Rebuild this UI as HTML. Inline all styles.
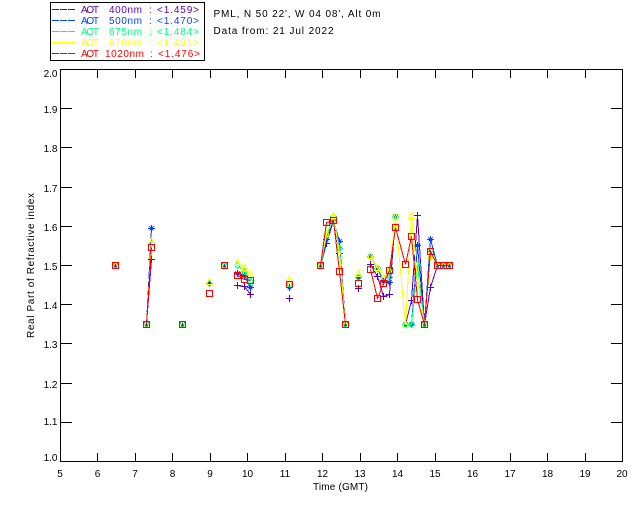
<!DOCTYPE html>
<html><head><meta charset="utf-8"><style>
html,body{margin:0;padding:0;background:#fff;width:640px;height:512px;overflow:hidden}
svg{display:block;position:absolute;left:0;top:0}
text{font-family:"Liberation Sans",sans-serif;font-size:10px;fill:#000}
.s{fill:none;stroke-width:1;shape-rendering:crispEdges}
.k{stroke:#000;fill:none;shape-rendering:crispEdges}
.p{stroke:#6000b0;marker-start:url(#mp);marker-mid:url(#mp);marker-end:url(#mp)}
.b{stroke:#0040ff;marker-start:url(#mb);marker-mid:url(#mb);marker-end:url(#mb)}
.g{stroke:#00ff80;marker-start:url(#mg);marker-mid:url(#mg);marker-end:url(#mg)}
.y{stroke:#ffff00;marker-start:url(#my);marker-mid:url(#my);marker-end:url(#my)}
.r{stroke:#ff0000;marker-start:url(#mr);marker-mid:url(#mr);marker-end:url(#mr)}
.yl text{text-anchor:end}
.xl text{text-anchor:middle}
</style></head><body>
<svg width="640" height="512" viewBox="0 0 640 512" xmlns="http://www.w3.org/2000/svg">
<defs>
<marker id="mp" markerUnits="userSpaceOnUse" markerWidth="13" markerHeight="13" refX="6.5" refY="6.5" overflow="visible"><path d="M3 6.5h7M6.5 3v7" stroke="#6000b0" fill="none" shape-rendering="crispEdges"/></marker>
<marker id="mb" markerUnits="userSpaceOnUse" markerWidth="13" markerHeight="13" refX="6.5" refY="6.5" overflow="visible"><path d="M3 6.5h7M6.5 3v7M4.5 4.5l4 4M8.5 4.5l-4 4" stroke="#0040ff" fill="none" shape-rendering="crispEdges"/></marker>
<marker id="mg" markerUnits="userSpaceOnUse" markerWidth="13" markerHeight="13" refX="6.5" refY="6.5" overflow="visible"><path d="M6.5 3.5l3 3-3 3-3-3z" stroke="#00ff80" fill="none" shape-rendering="crispEdges"/></marker>
<marker id="my" markerUnits="userSpaceOnUse" markerWidth="13" markerHeight="13" refX="6.5" refY="6.5" overflow="visible"><path d="M6.5 3l3 6.5h-6z" stroke="#ffff00" fill="none" shape-rendering="crispEdges"/></marker>
<marker id="mr" markerUnits="userSpaceOnUse" markerWidth="13" markerHeight="13" refX="6.5" refY="6.5" overflow="visible"><rect x="3.5" y="3.5" width="6" height="6" stroke="#ff0000" fill="none" shape-rendering="crispEdges"/></marker>
</defs>

<rect class="k" x="50.5" y="2.5" width="154" height="58"/>
<g class="s" stroke-dasharray="7 1">
<path d="M52 9.5h24" stroke="#6000b0"/>
<path d="M52 20.5h24" stroke="#0040ff"/>
<path d="M52 31.5h24" stroke="#00ff80"/>
<path d="M52 42.5h24" stroke="#ffff00"/>
<path d="M52 53.5h24" stroke="#ff0000"/>
</g>
<g>
<text x="81" y="13" textLength="18" style="fill:#6000b0">AOT</text><text x="109" y="13" textLength="33" style="fill:#6000b0">400nm</text><text x="149" y="13" style="fill:#6000b0">:</text><text x="157" y="13" textLength="42" style="fill:#6000b0">&lt;1.459&gt;</text>
<text x="81" y="24" textLength="18" style="fill:#0040ff">AOT</text><text x="109" y="24" textLength="33" style="fill:#0040ff">500nm</text><text x="149" y="24" style="fill:#0040ff">:</text><text x="157" y="24" textLength="42" style="fill:#0040ff">&lt;1.470&gt;</text>
<text x="81" y="35" textLength="18" style="fill:#00ff80">AOT</text><text x="109" y="35" textLength="33" style="fill:#00ff80">675nm</text><text x="149" y="35" style="fill:#00ff80">:</text><text x="157" y="35" textLength="42" style="fill:#00ff80">&lt;1.484&gt;</text>
<text x="81" y="46" textLength="18" style="fill:#ffff00">AOT</text><text x="109" y="46" textLength="33" style="fill:#ffff00">870nm</text><text x="149" y="46" style="fill:#ffff00">:</text><text x="157" y="46" textLength="42" style="fill:#ffff00">&lt;1.491&gt;</text>
<text x="81" y="57" textLength="18" style="fill:#ff0000">AOT</text><text x="105" y="57" textLength="39" style="fill:#ff0000">1020nm</text><text x="150" y="57" style="fill:#ff0000">:</text><text x="158" y="57" textLength="42" style="fill:#ff0000">&lt;1.476&gt;</text>
</g>
<text x="213.5" y="17" textLength="167">PML, N 50 22', W 04 08', Alt 0m</text>
<text x="213.5" y="34" textLength="120">Data from: 21 Jul 2022</text>

<rect class="k" x="60.5" y="69.5" width="562" height="392"/>
<path class="k" d="M60 108.5h12M60 147.5h12M60 187.5h12M60 226.5h12M60 265.5h12M60 304.5h12M60 343.5h12M60 383.5h12M60 422.5h12
M622 108.5h-11M622 147.5h-11M622 187.5h-11M622 226.5h-11M622 265.5h-11M622 304.5h-11M622 343.5h-11M622 383.5h-11M622 422.5h-11
M97.5 70v8M135.5 70v8M172.5 70v8M210.5 70v8M247.5 70v8M285.5 70v8M322.5 70v8M360.5 70v8M397.5 70v8M435.5 70v8M472.5 70v8M510.5 70v8M547.5 70v8M585.5 70v8
M97.5 461v-8M135.5 461v-8M172.5 461v-8M210.5 461v-8M247.5 461v-8M285.5 461v-8M322.5 461v-8M360.5 461v-8M397.5 461v-8M435.5 461v-8M472.5 461v-8M510.5 461v-8M547.5 461v-8M585.5 461v-8"/>
<g class="yl">
<text x="57.5" y="77">2.0</text><text x="57.5" y="113">1.9</text><text x="57.5" y="152">1.8</text><text x="57.5" y="192">1.7</text><text x="57.5" y="231">1.6</text><text x="57.5" y="270">1.5</text><text x="57.5" y="309">1.4</text><text x="57.5" y="348">1.3</text><text x="57.5" y="388">1.2</text><text x="57.5" y="425">1.1</text><text x="57.5" y="461">1.0</text>
</g>
<g class="xl">
<text x="60" y="477">5</text><text x="97.5" y="477">6</text><text x="135" y="477">7</text><text x="172.5" y="477">8</text><text x="210" y="477">9</text><text x="247.5" y="477">10</text><text x="285" y="477">11</text><text x="322.5" y="477">12</text><text x="360" y="477">13</text><text x="397.5" y="477">14</text><text x="435" y="477">15</text><text x="472.5" y="477">16</text><text x="510" y="477">17</text><text x="547.5" y="477">18</text><text x="585" y="477">19</text><text x="622" y="477">20</text>
</g>
<text x="313" y="490" textLength="55">Time (GMT)</text>
<text transform="translate(34 338) rotate(-90)" textLength="145">Real Part of Refractive index</text>

<g class="s p">
<polyline points="115.5,265.5"/><polyline points="146.5,324.5 151.5,259.5"/><polyline points="182.5,324.5"/><polyline points="209.5,283.5"/><polyline points="224.5,265.5"/>
<polyline points="237.5,285.5 244.5,286.5 250.5,294.5"/><polyline points="289.5,298.5"/>
<polyline points="320.5,265.5 326.5,243.5 333.5,220.5 339.5,253.5 345.5,324.5"/><polyline points="358.5,288.5"/>
<polyline points="370.5,264.5 377.5,276.5 383.5,296.5 389.5,294.5 395.5,216.5 405.5,324.5 411.5,300.5 417.5,215.5 424.5,324.5 430.5,287.5 437.5,265.5 443.5,265.5 449.5,265.5"/>
</g>
<g class="s b">
<polyline points="115.5,265.5"/><polyline points="146.5,324.5 151.5,228.5"/><polyline points="182.5,324.5"/><polyline points="209.5,283.5"/><polyline points="224.5,265.5"/>
<polyline points="237.5,273.5 244.5,275.5 250.5,287.5"/><polyline points="289.5,287.5"/>
<polyline points="320.5,265.5 326.5,239.5 333.5,220.5 339.5,241.5 345.5,324.5"/><polyline points="358.5,277.5"/>
<polyline points="370.5,256.5 377.5,268.5 383.5,281.5 389.5,282.5 395.5,216.5 405.5,324.5 411.5,324.5 417.5,245.5 424.5,324.5 430.5,239.5 437.5,265.5 443.5,265.5 449.5,265.5"/>
</g>
<g class="s g">
<polyline points="115.5,265.5"/><polyline points="146.5,324.5 151.5,243.5"/><polyline points="182.5,324.5"/><polyline points="209.5,283.5"/><polyline points="224.5,265.5"/>
<polyline points="237.5,265.5 244.5,271.5 250.5,281.5"/><polyline points="289.5,284.5"/>
<polyline points="320.5,265.5 326.5,235.5 333.5,216.5 339.5,248.5 345.5,324.5"/><polyline points="358.5,277.5"/>
<polyline points="370.5,256.5 377.5,268.5 383.5,277.5 389.5,277.5 395.5,216.5 405.5,324.5 411.5,324.5 417.5,264.5 424.5,324.5 430.5,250.5 437.5,265.5 443.5,265.5 449.5,265.5"/>
</g>
<g class="s y">
<polyline points="115.5,265.5"/><polyline points="146.5,324.5 151.5,241.5"/><polyline points="182.5,324.5"/><polyline points="209.5,281.5"/><polyline points="224.5,265.5"/>
<polyline points="237.5,262.5 244.5,267.5 250.5,274.5"/><polyline points="289.5,279.5"/>
<polyline points="320.5,265.5 326.5,233.5 333.5,215.5 339.5,254.5 345.5,324.5"/><polyline points="358.5,273.5"/>
<polyline points="370.5,255.5 377.5,267.5 383.5,277.5 389.5,270.5 395.5,216.5 405.5,324.5 411.5,215.5 417.5,280.5 424.5,324.5 430.5,255.5 437.5,265.5 443.5,265.5 449.5,265.5"/>
</g>
<g class="s r">
<polyline points="115.5,265.5"/><polyline points="146.5,324.5 151.5,247.5"/><polyline points="182.5,324.5"/><polyline points="209.5,293.5"/><polyline points="224.5,265.5"/>
<polyline points="237.5,275.5 244.5,279.5 250.5,280.5"/><polyline points="289.5,284.5"/>
<polyline points="320.5,265.5 326.5,222.5 333.5,220.5 339.5,271.5 345.5,324.5"/><polyline points="358.5,283.5"/>
<polyline points="370.5,269.5 377.5,298.5 383.5,283.5 389.5,270.5 395.5,227.5 405.5,264.5 411.5,236.5 417.5,299.5 424.5,324.5 430.5,251.5 437.5,265.5 443.5,265.5 449.5,265.5"/>
</g>
</svg>
</body></html>
